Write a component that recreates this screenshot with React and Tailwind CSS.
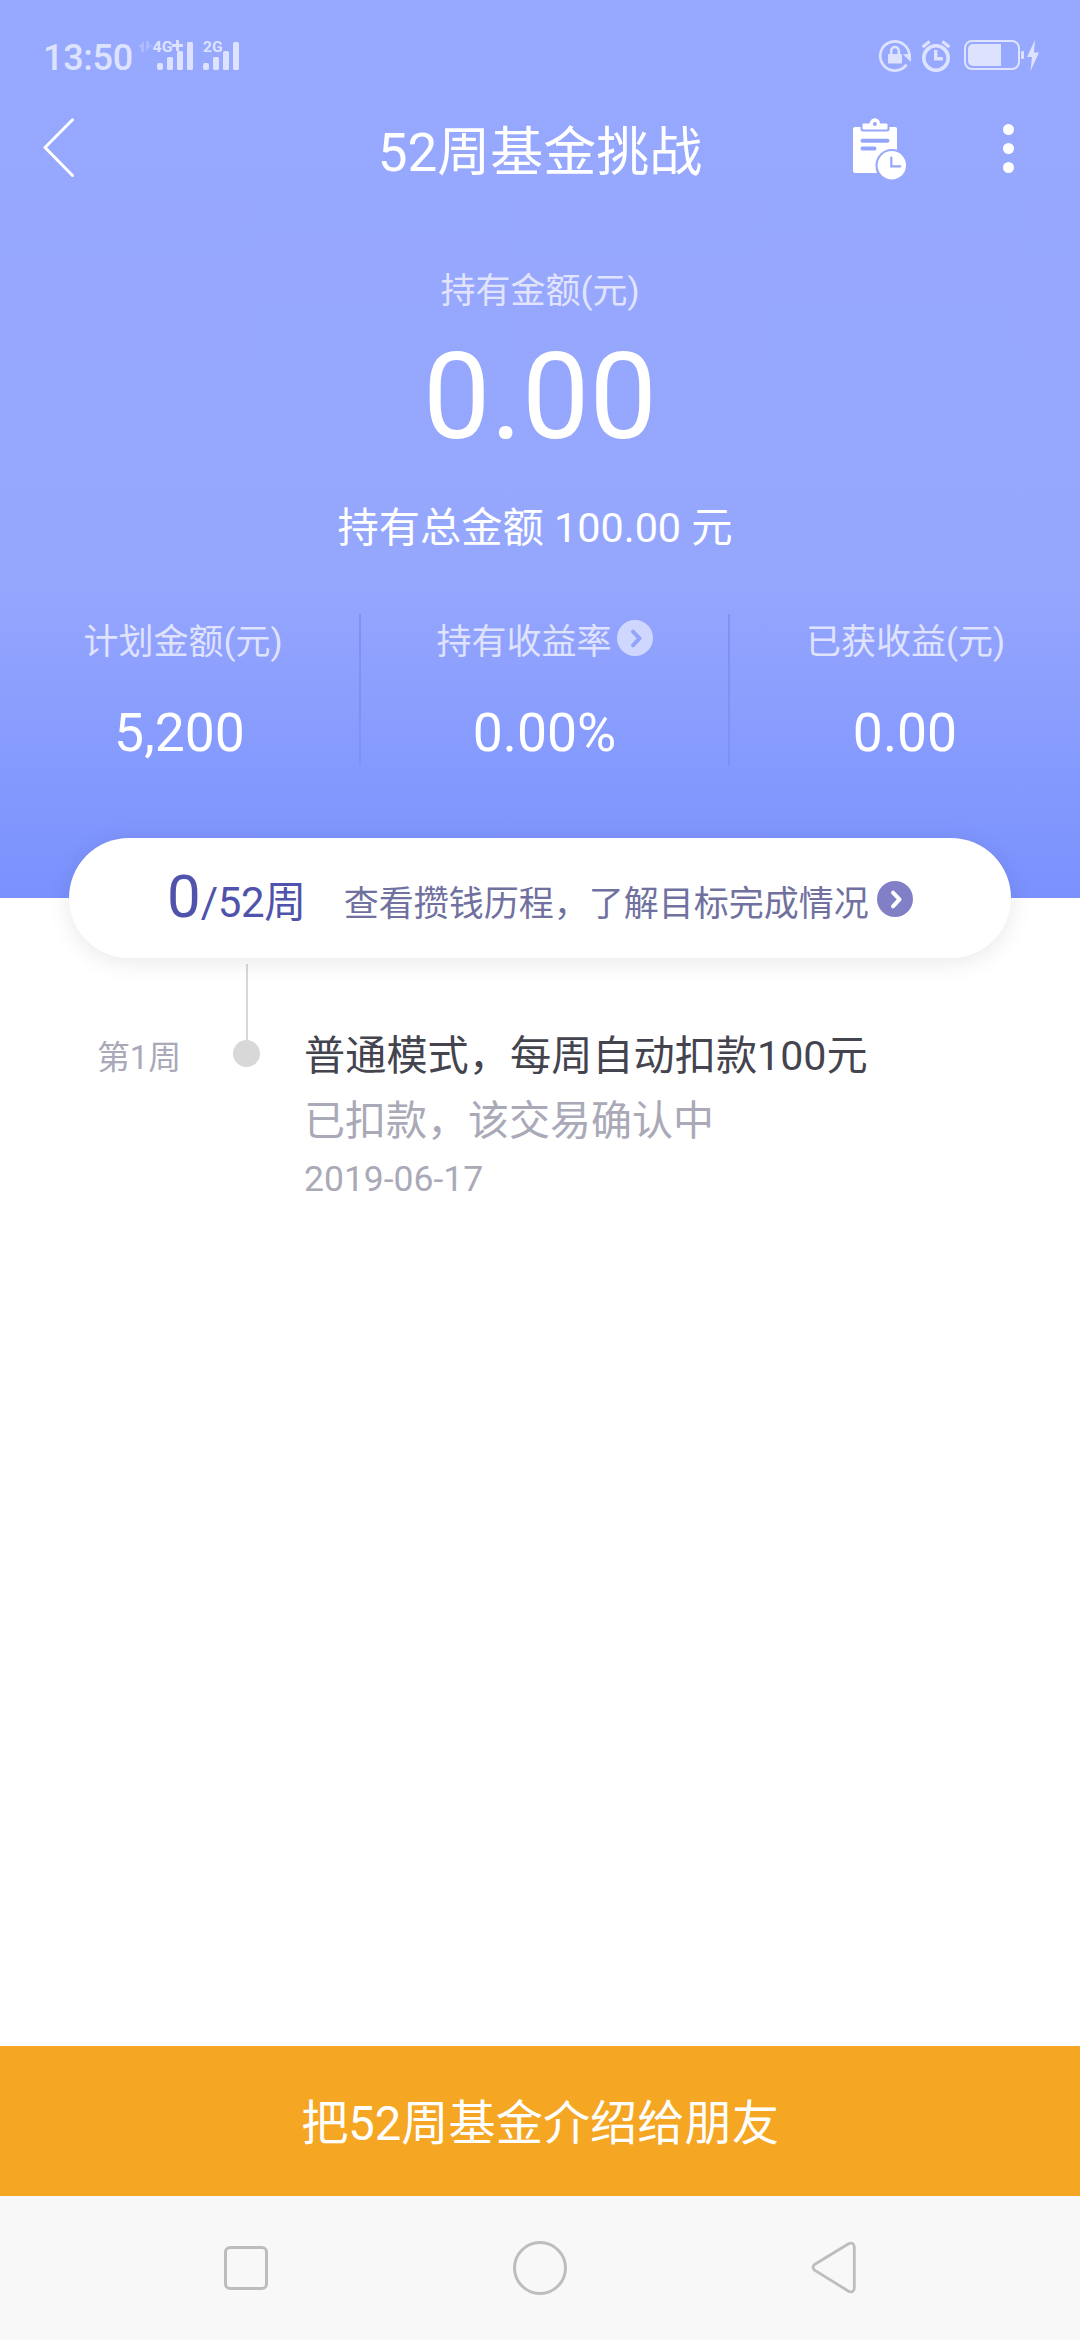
import React from 'react';

const stats = [
  { label: '计划金额(元)', value: '5,200', width: 'w-[361px] border-r-2', labelPad: 'pl-[7px]' },
  { label: '持有收益率', value: '0.00%', width: 'w-[369px] border-r-2', labelPad: 'pl-0', more: true },
  { label: '已获收益(元)', value: '0.00', width: 'w-[350px]', labelPad: 'pl-px' },
];

function SignalIcons() {
  return (
    <svg width="106" height="34" viewBox="137 38 106 34" fill="#dde3ff">
      <g opacity="0.3">
        <path d="M138 46l6-6v11h-3v-5z" />
        <path d="M152 44l-6 6V40h3v4z" />
      </g>
      <text x="152.5" y="51" fontSize="15" fontWeight="700" textLength="20" lengthAdjust="spacingAndGlyphs">4G</text>
      <path d="M176 39h3v4h4v3h-4v4h-3v-4h-4v-3h4z" />
      <rect x="157" y="62" width="6" height="7" rx="2" />
      <rect x="167" y="56" width="6" height="13" rx="1.5" />
      <rect x="177" y="50" width="6" height="19" rx="1.5" />
      <rect x="187" y="41" width="6" height="28" rx="1.5" />
      <text x="203" y="51" fontSize="15" fontWeight="700" textLength="19.5" lengthAdjust="spacingAndGlyphs">2G</text>
      <rect x="203" y="62" width="6" height="7" rx="2" />
      <rect x="213" y="56" width="6" height="13" rx="1.5" />
      <rect x="223" y="50" width="6" height="19" rx="1.5" />
      <rect x="233" y="41" width="6" height="28" rx="1.5" />
    </svg>
  );
}

function RotationLockIcon() {
  return (
    <svg width="34" height="34" viewBox="0 0 34 34" fill="none">
      <path d="M28.6 25.6A14.6 14.6 0 1 1 31.4 18" stroke="#dde3ff" strokeWidth="2.7" />
      <path d="M25 15.5l8-1v8.500z" fill="#dde3ff" />
      <rect x="10" y="15" width="14" height="9.5" rx="1" fill="#dde3ff" />
      <path d="M13.2 15.5v-3.700a3.800 3.800 0 0 1 7.600 0v3.700" stroke="#dde3ff" strokeWidth="2.6" />
    </svg>
  );
}

function AlarmIcon() {
  return (
    <svg width="30" height="34" viewBox="0 0 30 34" fill="none" stroke="#dde3ff">
      <circle cx="15" cy="19" r="12.2" strokeWidth="3.6" />
      <path d="M14.7 11v8.800h7.200" strokeWidth="3.4" />
      <path d="M1.600 8l7-5.600M28.400 8l-7-5.600" strokeWidth="3.2" />
    </svg>
  );
}

function BatteryIcon() {
  return (
    <svg width="76" height="32" viewBox="0 0 76 32" fill="none">
      <rect x="1" y="1" width="54" height="28" rx="7" stroke="#dde3ff" strokeWidth="2" />
      <path d="M9 4h28v22H9a5 5 0 0 1-5-5V9a5 5 0 0 1 5-5z" fill="#dde3ff" />
      <rect x="57" y="11" width="3" height="8" rx="1" fill="#dde3ff" />
      <path d="M71 0L63 17h5l-1.500 14L75 12.500h-5z" fill="#dde3ff" />
    </svg>
  );
}

function PlanListIcon() {
  return (
    <svg width="54" height="63" viewBox="0 0 54 63" fill="none">
      <path d="M2 10h5.500v2q0 2.500 2.500 2.500h24q2.500 0 2.500-2.500v-2H42q2 0 2 2v22h-5.500A16 16 0 0 0 24 56H2q-2 0-2-2V12q0-2 2-2z" fill="#fff" />
      <path d="M10.500 6.500h6.200a5 5 0 0 1 10.300 0h6.500q1 0 1 1v4q0 1-1 1h-23q-1 0-1-1v-4q0-1 1-1z" fill="#fff" />
      <circle cx="21.9" cy="7" r="2" fill="#94a6fb" />
      <path d="M9.500 23.800h25M9.500 31.600h12" stroke="#94a6fb" strokeWidth="4" strokeLinecap="round" />
      <circle cx="38.8" cy="48.3" r="16.3" fill="#97a8fd" />
      <circle cx="38.8" cy="48.3" r="14.2" fill="#fff" />
      <path d="M38.300 40.500v8.800h9" stroke="#94a6fb" strokeWidth="2.2" strokeLinecap="round" />
    </svg>
  );
}

function CircleArrow({ fill, stroke, className }) {
  return (
    <svg width="36" height="36" viewBox="0 0 36 36" className={className}>
      <circle cx="18" cy="18" r="18" fill={fill} />
      <path d="M16 11.700l6.500 6.700-6.500 7" fill="none" stroke={stroke} strokeWidth="4" strokeLinecap="round" strokeLinejoin="round" />
    </svg>
  );
}

function Hero() {
  return (
    <header className="h-[898px] bg-[linear-gradient(to_bottom,#97a9fe_0px,#95a6fd_580px,#8298fe_800px,#7a91fe_898px)] text-white">
      {/* status bar */}
      <div className="flex h-28 items-center justify-between pr-[40px] pl-[43px] text-[#dde3ff]">
        <div className="flex items-center">
          <span className="w-[94px] pt-1 text-[36px] leading-none font-medium tracking-[-0.3px]">13:50</span>
          <SignalIcons />
        </div>
        <div className="flex items-center">
          <RotationLockIcon />
          <span className="w-[9px]" />
          <AlarmIcon />
          <span className="w-[13px]" />
          <BatteryIcon />
        </div>
      </div>

      {/* title bar */}
      <div className="grid h-[72px] grid-cols-[300px_1fr_300px] items-center">
        <svg width="32" height="60" viewBox="0 0 32 60" fill="none" className="ml-[43px]">
          <path d="M29.500 1.800L2 29.500l27.500 28" stroke="#fff" strokeWidth="3" strokeLinecap="round" strokeLinejoin="round" />
        </svg>
        <h1 className="pt-[10px] text-center text-[53px] leading-[60px]">52周基金挑战</h1>
        <div className="flex items-center pl-[73px]">
          <PlanListIcon />
          <div className="ml-24 flex flex-col gap-2">
            <i className="size-[11px] rounded-full bg-white" />
            <i className="size-[11px] rounded-full bg-white" />
            <i className="size-[11px] rounded-full bg-white" />
          </div>
        </div>
      </div>

      {/* holdings */}
      <div className="flex flex-col items-center">
        <p className="mt-[85px] text-[35px] leading-[46px] text-[#e2e4fe]">持有金额(元)</p>
        <p className="mt-[22px] text-[120px] leading-[120px]">0.00</p>
        <p className="mt-[45px] pr-[10px] text-[41.300px] leading-[52px]">持有总金额 100.00 元</p>
      </div>

      <div className="mt-[60px] flex h-[152px]">
        {stats.map((s) => (
          <div key={s.label} className={`flex flex-col items-center border-[#7d92f3] ${s.width}`}>
            <div className={`flex text-[35px] leading-[58px] text-[#e0e3fe] ${s.labelPad}`}>
              {s.label}
              {s.more && <CircleArrow fill="#d0d7ff" stroke="#92a4fb" className="mt-[6px] ml-[5px]" />}
            </div>
            <div className="mt-[31px] text-[53.500px] leading-[60px]">{s.value}</div>
          </div>
        ))}
      </div>
    </header>
  );
}

function ProgressPill() {
  return (
    <div className="relative mx-[69px] -mt-[60px] flex h-[120px] items-baseline rounded-full bg-white pt-6 pl-[98px] shadow-[0_4px_24px_rgba(0,0,0,0.09)]">
      <span className="text-[60px] leading-[70px] text-[#5053ab]">0</span>
      <span className="w-[143px] text-[42px] leading-[70px] tracking-[-0.3px] text-[#5053ab]">/52周</span>
      <span className="-translate-y-px text-[35px] leading-[70px] text-[#70719f]">查看攒钱历程，了解目标完成情况</span>
      <CircleArrow fill="#8180c7" stroke="#fff" className="mt-[19px] ml-2 self-start" />
    </div>
  );
}

function Timeline() {
  return (
    <section className="mt-[6px] flex flex-1">
      <div className="w-[232px] pt-[71px] pl-[97px] text-[33px] leading-[46px] tracking-[-0.2px] text-[#a9a9b7]">第1周</div>
      <div className="flex w-[28px] flex-col items-center">
        <span className="ml-[2px] h-[76px] w-[2px] bg-[#d8d8d8]" />
        <span className="size-[27px] rounded-full bg-[#d8d8d8]" />
      </div>
      <div className="pt-[62px] pl-[44px] text-[#a9a9b7]">
        <p className="text-[41.200px] leading-[60px] text-[#44444f]">普通模式，每周自动扣款100元</p>
        <p className="mt-[5px] text-[41px] leading-[60px]">已扣款，该交易确认中</p>
        <p className="mt-[3px] text-[35.500px] leading-[50px]">2019-06-17</p>
      </div>
    </section>
  );
}

function SystemNav() {
  return (
    <nav className="flex h-36 items-center justify-between bg-[#f8f8f8] pr-[223px] pl-[224px]">
      <span className="size-11 rounded-[6px] border-[3px] border-[#bdbdbd]" />
      <span className="size-[54px] rounded-full border-[3px] border-[#bdbdbd]" />
      <svg width="46" height="54" viewBox="0 0 46 54" fill="none">
        <path d="M38 2.500L3.500 23.500q-3 2.800 0 5.600L38 50.500q5.300 1.500 5.300-4V6.500q0-5.500-5.300-4z" stroke="#bdbdbd" strokeWidth="2.8" strokeLinejoin="round" />
      </svg>
    </nav>
  );
}

export default function App() {
  return (
    <div className="flex h-[2340px] w-[1080px] flex-col overflow-hidden bg-white font-[Roboto,'Noto_Sans_CJK_SC',sans-serif]">
      <Hero />
      <ProgressPill />
      <Timeline />
      <button className="h-[150px] bg-[#f5a623] pt-[6px] text-[47.200px] text-white">把52周基金介绍给朋友</button>
      <SystemNav />
    </div>
  );
}
